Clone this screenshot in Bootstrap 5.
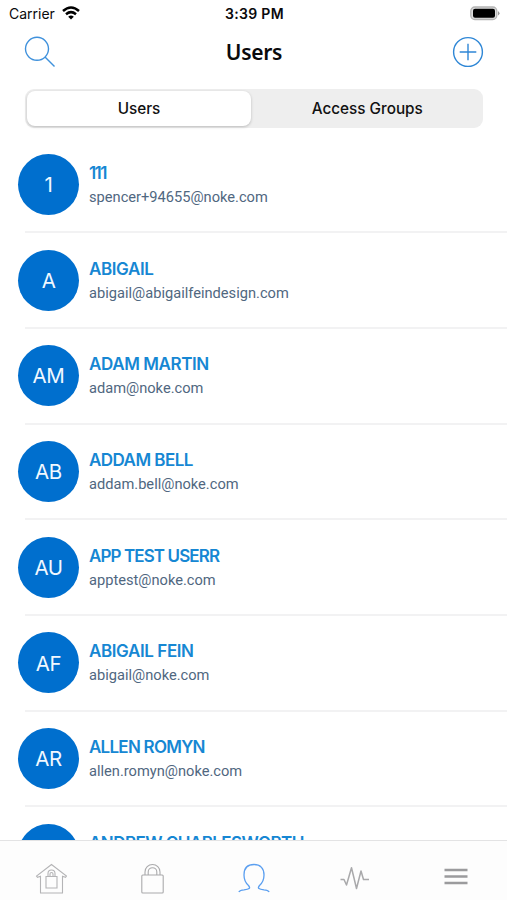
<!DOCTYPE html>
<html lang="en">
<head>
<meta charset="utf-8">
<meta name="viewport" content="width=device-width, initial-scale=1">
<title>Users</title>
<link href="https://cdn.jsdelivr.net/npm/bootstrap@5.3.0/dist/css/bootstrap.min.css" rel="stylesheet">
<style>
  body { font-family: Inter, "Liberation Sans", sans-serif; color: #0a0a0c; background: #fff; }
  svg { display: block; flex: none; }
  .screen { height: 900px; }
  .status { height: 27px; padding: 0 7px 0 9px; font-size: 14px; line-height: 27px; }
  .status > * { flex: 1 1 0; }
  .clock { font-weight: 600; letter-spacing: .3px; }
  .wifi { margin: 0 0 2px -1px; }
  .titlebar { height: 50px; padding: 0 23px 0 24px; }
  .titlebar h1 { font: 600 21px/50px "Noto Sans", sans-serif; letter-spacing: -.3px; }
  .segments { margin: 12px 24.5px 0 25px; height: 39px; padding: 2px; background: #eee; border-radius: 9px; }
  .segment { flex: 1 1 0; border: 0; background: none; padding: 2px 0 0 3px; font-size: 15.3px; font-weight: 500; color: #111; border-radius: 8px; }
  .segment.active { flex: 0 0 224px; padding: 2px 0 0; background: #fff; box-shadow: 0 1px 3px rgba(0,0,0,.22); }
  .users { margin-top: 8.5px; }
  .user { height: 95.7px; padding-left: 18px; position: relative; }
  .user::after { content: ""; position: absolute; left: 25px; right: 0; bottom: -1px; height: 2px; background: #f2f2f3; }
  .avatar { width: 61px; height: 61px; padding-top: 2px; background: #006fce; color: #f1f8ff; font: 400 20.5px/1 Inter, sans-serif; letter-spacing: -.4px; }
  .who { margin: 1px 0 0 10px; }
  .name { font: 600 17px/24px Inter, sans-serif; color: #1687d3; letter-spacing: -.4px; }
  .mail { min-height: 24px; font: 400 14.65px/24px Roboto, sans-serif; color: #50677f; }
  .user:nth-child(1) .name { letter-spacing: -1.6px; }
  .user:nth-child(4) .name { letter-spacing: -.55px; }
  .user:nth-child(5) .name { letter-spacing: -.9px; }
  .user:nth-child(7) .name { letter-spacing: -.75px; }
  .user:nth-child(8) .name { letter-spacing: -.55px; }
  .tabs { height: 60px; background: #fdfdfd; border-top: 1.5px solid #e3e3e4; padding-top: 6px; }
</style>
</head>
<body>
<div class="screen d-flex flex-column overflow-hidden">
  <header class="flex-shrink-0">
    <div class="status d-flex align-items-center">
      <div class="d-flex align-items-center gap-2"><span>Carrier</span>
        <svg class="wifi" width="18" height="14" viewBox="0 0 18 14" fill="none" stroke="#000" stroke-width="2.5"><path d="M1 5Q9-2 17 5M4 8.2Q9 4 14 8.2"/><path d="M9 13.5 6.2 10.7Q9 8.5 11.8 10.7Z" fill="#000" stroke="none"/></svg>
      </div>
      <div class="clock text-center">3:39 PM</div>
      <div class="d-flex justify-content-end">
        <svg width="31" height="16" viewBox="0 0 31 16"><rect x="1.8" y="1" width="26" height="12.5" rx="4" fill="#ddd" stroke="#b4b4b4" stroke-width="1.3"/><rect x="4" y="2.7" width="22" height="9.1" rx="2" fill="#000"/><path d="M29 5q3 2.300 0 4.600z" fill="#999"/></svg>
      </div>
    </div>
    <div class="titlebar d-flex align-items-center justify-content-between">
      <svg width="32" height="32" viewBox="0 0 32 32" fill="none" stroke="#3f91dc" stroke-width="1.4"><circle cx="13" cy="12.8" r="11.5"/><path d="m21 21 9.5 9.5"/></svg>
      <h1 class="m-0">Users</h1>
      <svg width="32" height="32" viewBox="0 0 32 32" fill="none" stroke="#2f87d6" stroke-width="1.4"><circle cx="16" cy="16" r="14.4"/><path d="M16 7.700v16.600M7.700 16h16.600"/></svg>
    </div>
    <div class="segments d-flex">
      <button class="segment active">Users</button>
      <button class="segment">Access Groups</button>
    </div>
  </header>
  <main class="users flex-grow-1 overflow-hidden">
    <div class="user d-flex align-items-center"><div class="avatar rounded-circle d-flex align-items-center justify-content-center">1</div><div class="who"><div class="name">111</div><div class="mail">spencer+94655@noke.com</div></div></div>
    <div class="user d-flex align-items-center"><div class="avatar rounded-circle d-flex align-items-center justify-content-center">A</div><div class="who"><div class="name">ABIGAIL</div><div class="mail">abigail@abigailfeindesign.com</div></div></div>
    <div class="user d-flex align-items-center"><div class="avatar rounded-circle d-flex align-items-center justify-content-center">AM</div><div class="who"><div class="name">ADAM MARTIN</div><div class="mail">adam@noke.com</div></div></div>
    <div class="user d-flex align-items-center"><div class="avatar rounded-circle d-flex align-items-center justify-content-center">AB</div><div class="who"><div class="name">ADDAM BELL</div><div class="mail">addam.bell@noke.com</div></div></div>
    <div class="user d-flex align-items-center"><div class="avatar rounded-circle d-flex align-items-center justify-content-center">AU</div><div class="who"><div class="name">APP TEST USERR</div><div class="mail">apptest@noke.com</div></div></div>
    <div class="user d-flex align-items-center"><div class="avatar rounded-circle d-flex align-items-center justify-content-center">AF</div><div class="who"><div class="name">ABIGAIL FEIN</div><div class="mail">abigail@noke.com</div></div></div>
    <div class="user d-flex align-items-center"><div class="avatar rounded-circle d-flex align-items-center justify-content-center">AR</div><div class="who"><div class="name">ALLEN ROMYN</div><div class="mail">allen.romyn@noke.com</div></div></div>
    <div class="user d-flex align-items-center"><div class="avatar rounded-circle"></div><div class="who"><div class="name">ANDREW CHARLESWORTH</div><div class="mail"></div></div></div>
  </main>
  <nav class="tabs d-flex flex-shrink-0">
    <a class="col d-flex justify-content-center pt-3" href="#" aria-label="Home"><svg width="32" height="32" viewBox="0 0 32 32" fill="none" stroke="#b4b4b6" stroke-width="1.1"><path d="M16.500 1.500 1.500 13l1 1.300 3-1V30h22V13.300l3 1 1-1.300Z"/><path d="M11 13.500h11V25h-11ZM13 13.500v-3a3.500 3.500 0 0 1 7 0v3M15 13.500V11a1.500 1.500 0 0 1 3 0v2.500"/></svg></a>
    <a class="col d-flex justify-content-center pt-3" href="#" aria-label="Locks"><svg width="24" height="32" viewBox="0 0 24 32" fill="none" stroke="#aaaaac" stroke-width="1.1"><rect x="1.800" y="12" width="21.400" height="18" rx="1"/><path d="M5 12V9a7.500 7.500 0 0 1 15 0v3M8.200 12V9a4.300 4.300 0 0 1 8.600 0v3"/></svg></a>
    <a class="col d-flex justify-content-center pt-3" href="#" aria-label="Users"><svg width="32" height="32" viewBox="0 0 32 32" fill="none" stroke="#5b9ff0" stroke-width="1.300"><path d="M.8 29Q2 27.200 6 26.900C11 26.300 13 25.500 10.500 22.500Q6 18.500 6 12C6 5 10 1.500 16 1.500S26 5 26 12q0 6.500-4.500 10.500C19 25.500 21 26.300 26 26.900q4 .3 5.200 2.100"/></svg></a>
    <a class="col d-flex justify-content-center pt-3" href="#" aria-label="Activity"><svg width="30" height="32" viewBox="0 0 30 32" fill="none" stroke="#a9a9ab" stroke-width="1.500" stroke-linejoin="round"><path d="M.5 16.500H4L6.500 22 11.500 4.800 16.500 25.500 21 8 23.500 16.500H29"/></svg></a>
    <a class="col d-flex justify-content-center pt-3" href="#" aria-label="Menu"><svg width="24" height="32" viewBox="0 0 24 32" stroke="#9b9b9d" stroke-width="2.300"><path d="M.5 7h23M.5 13.500h23M.5 20h23"/></svg></a>
  </nav>
</div>
<script src="https://cdn.jsdelivr.net/npm/bootstrap@5.3.0/dist/js/bootstrap.bundle.min.js"></script>
</body>
</html>
